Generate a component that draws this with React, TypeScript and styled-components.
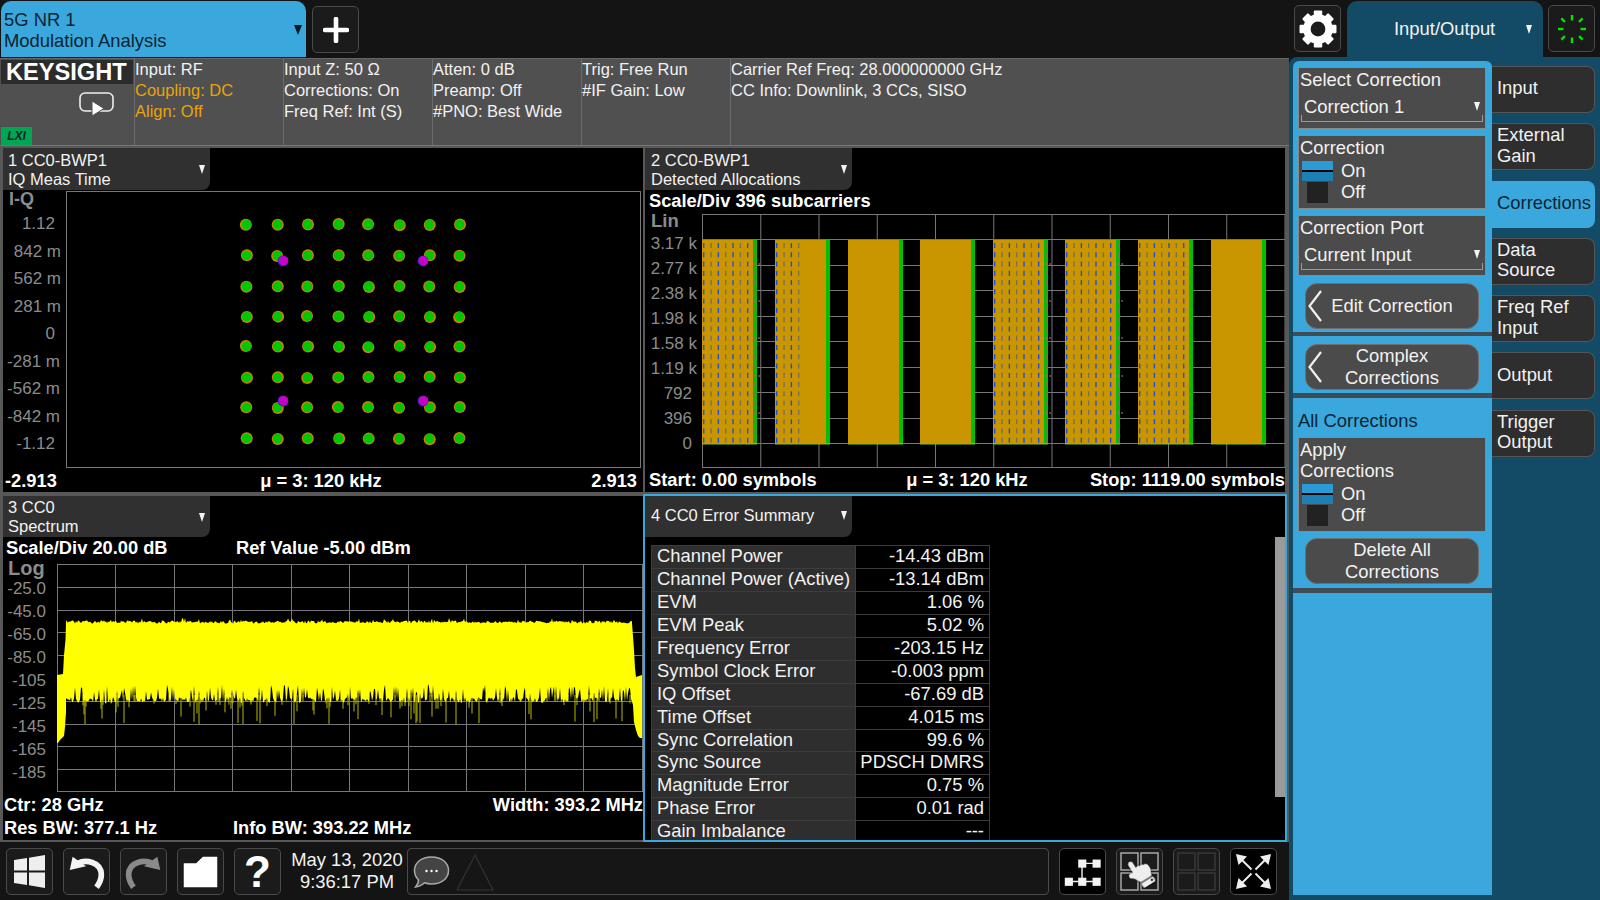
import React from "react";
import styled, { createGlobalStyle } from "styled-components";
import { FaHandPointUp } from "react-icons/fa";

const Global = createGlobalStyle`
  html, body { margin: 0; padding: 0; background: #141414; }
  body { font-family: "Liberation Sans", Arial, sans-serif; overflow: hidden; }
  * { box-sizing: border-box; }
`;

const BLUE = "#3aa8dc";
const NAVY = "#134a66";
const INK = "#0b2433";
const TEXT = "#f2f2f2";
const AXIS = "#8c8c8c";

const Root = styled.div`
  width: 1600px;
  height: 900px;
  display: grid;
  grid-template-columns: 1289px 311px;
  background: #141414;
  overflow: hidden;
  color: ${TEXT};
  font-size: 18.4px;
`;
const LeftColumn = styled.div`
  display: flex;
  flex-direction: column;
  height: 900px;
`;
const TopBar = styled.div`
  height: 58px;
  display: flex;
  align-items: flex-start;
  padding: 1px 0 0 1px;
  gap: 6px;
`;
const MeasureTab = styled.div`
  width: 305px;
  height: 56px;
  background: ${BLUE};
  color: ${INK};
  border-radius: 10px 10px 0 0;
  display: flex;
  align-items: center;
  justify-content: space-between;
  padding: 2px 4px 0 3px;
  line-height: 21px;
`;
const Caret = styled.span<{ $dark?: boolean; $small?: boolean }>`
  display: block;
  width: 0;
  height: 0;
  flex: none;
  border-left: ${(p) => (p.$small ? 3.5 : 4)}px solid transparent;
  border-right: ${(p) => (p.$small ? 3.5 : 4)}px solid transparent;
  border-top: ${(p) => (p.$small ? 9 : 10)}px solid ${(p) => (p.$dark ? "#0b1a24" : "#f4f4f4")};
`;
const IconButton = styled.div<{ $black?: boolean }>`
  position: relative;
  width: 47px;
  height: 47px;
  flex: none;
  display: flex;
  align-items: center;
  justify-content: center;
  background: ${(p) => (p.$black ? "#000" : "#1b1b1b")};
  border: 1px solid #4a4a4a;
  border-radius: 5px;
  color: #fff;
`;
const PlusButton = styled(IconButton)`
  margin-top: 5px;
`;
const InfoStrip = styled.div`
  height: 88px;
  display: grid;
  grid-template-columns: 134px 149px 149px 149px 149px 1fr;
  background: #505050;
  border-top: 1px solid #666;
  border-bottom: 1px solid #777;
  line-height: 21px;
  font-size: 16.5px;
`;
const LogoCell = styled.div`
  display: flex;
  flex-direction: column;
  padding: 1px 1px 0 1px;
`;
const Brand = styled.div`
  height: 24px;
  background: #2c2c2c;
  color: #fff;
  font-weight: 700;
  font-size: 23.6px;
  line-height: 25px;
  padding-left: 5px;
  white-space: nowrap;
`;
const RemoteIcon = styled.svg`
  margin: 8px 0 0 78px;
  display: block;
`;
const LxiBadge = styled.div`
  margin-top: auto;
  width: 31px;
  height: 18px;
  background: #00a651;
  color: #123;
  font-size: 12px;
  font-weight: 700;
  font-style: italic;
  line-height: 18px;
  text-align: center;
`;
const InfoCell = styled.div`
  border-left: 1px solid #6c6c6c;
  white-space: nowrap;
`;
const InfoLine = styled.div<{ $warn?: boolean }>`
  color: ${(p) => (p.$warn ? "#e8a40c" : TEXT)};
`;
const PanelGrid = styled.div`
  height: 696px;
  display: grid;
  grid-template-columns: 642px 644px;
  grid-template-rows: 348px 348px;
  padding-left: 1px;
  background: #585858;
`;
const Panel = styled.section<{ $active?: boolean; $openRight?: boolean }>`
  background: #000;
  border: 2px solid ${(p) => (p.$active ? BLUE : "#585858")};
  border-right-width: ${(p) => (p.$openRight ? 0 : 2)}px;
  display: flex;
  flex-direction: column;
  overflow: hidden;
  min-width: 0;
`;
const PanelTab = styled.div<{ $h: number; $pad?: number; $lift?: number }>`
  width: 207px;
  height: ${(p) => p.$h}px;
  flex: none;
  background: #303030;
  border-radius: 0 0 8px 0;
  font-size: 16.5px;
  line-height: 19px;
  display: flex;
  align-items: center;
  justify-content: space-between;
  padding: 1px 5px ${(p) => p.$lift ?? 0}px ${(p) => p.$pad ?? 5}px;
  white-space: nowrap;
`;
const ScaleRow = styled.div<{ $h: number; $cols?: string; $lh: number; $pad: number }>`
  height: ${(p) => p.$h}px;
  flex: none;
  display: grid;
  grid-template-columns: ${(p) => p.$cols ?? "auto"};
  justify-content: start;
  padding-left: ${(p) => p.$pad}px;
  font-weight: 700;
  font-size: 18.3px;
  line-height: ${(p) => p.$lh}px;
  color: #fff;
  white-space: nowrap;
`;
const PlotRow = styled.div<{ $h: number; $top?: number }>`
  height: ${(p) => p.$h}px;
  flex: none;
  margin-top: ${(p) => p.$top ?? 0}px;
  display: flex;
  svg { display: block; flex: none; }
`;
const Axis = styled.div<{ $w: number }>`
  width: ${(p) => p.$w}px;
  flex: none;
  color: ${AXIS};
`;
const AxisTitle = styled.div<{ $h: number; $lh: number; $size: number; $inset?: number }>`
  height: ${(p) => p.$h}px;
  line-height: ${(p) => p.$lh}px;
  font-size: ${(p) => p.$size}px;
  font-weight: 700;
  padding-left: ${(p) => p.$inset ?? 6}px;
  white-space: nowrap;
`;
const AxisLabel = styled.div<{ $h: number; $right: number }>`
  height: ${(p) => p.$h}px;
  line-height: ${(p) => p.$h}px;
  font-size: 17px;
  text-align: right;
  padding-right: ${(p) => p.$right}px;
  white-space: nowrap;
`;
const PlotFooter = styled.div<{ $l: number; $r: number }>`
  height: 24px;
  flex: none;
  display: grid;
  grid-template-columns: 1fr auto 1fr;
  padding: 0 ${(p) => p.$r}px 0 ${(p) => p.$l}px;
  font-weight: 700;
  font-size: 18.3px;
  line-height: 24px;
  color: #fff;
  white-space: nowrap;
`;
const FooterEnd = styled.span`
  text-align: right;
`;
const SpectrumFooter = styled.div`
  flex: none;
  font-weight: 700;
  font-size: 18.3px;
  line-height: 23px;
  color: #fff;
  padding-left: 1px;
  padding-top: 1px;
  white-space: nowrap;
`;
const FooterLine = styled.div`
  display: flex;
  justify-content: space-between;
`;
const FooterCols = styled.div`
  display: grid;
  grid-template-columns: 229px auto;
  justify-content: start;
`;
const SummaryBody = styled.div`
  flex: 1;
  min-height: 0;
  display: flex;
  justify-content: space-between;
  align-items: flex-start;
  padding-left: 6px;
`;
const SummaryTable = styled.div`
  margin-top: 8px;
  width: 339px;
  height: 295px;
  overflow: hidden;
  border-top: 1px solid #3c3c3c;
`;
const SummaryRow = styled.div`
  display: grid;
  grid-template-columns: 204.5px 134.5px;
  height: 22.95px;
  line-height: 20.9px;
  font-size: 18.4px;
  border-bottom: 1px solid #3c3c3c;
  white-space: nowrap;
`;
const SummaryName = styled.div`
  background: #2e2e2e;
  padding-left: 5px;
  border-left: 1px solid #3c3c3c;
  border-right: 1px solid #3c3c3c;
`;
const SummaryValue = styled.div`
  text-align: right;
  padding-right: 5px;
  border-right: 1px solid #3c3c3c;
`;
const ScrollThumb = styled.div`
  width: 10px;
  height: 260px;
  background: #9a9a9a;
  flex: none;
`;
const BottomBar = styled.div`
  height: 58px;
  display: flex;
  align-items: flex-start;
  padding: 6px 0 0 6px;
  gap: 10px;
`;
const DateBlock = styled.div`
  width: 116px;
  margin: 0 -8px 0 -2px;
  text-align: center;
  line-height: 22px;
  padding-top: 1px;
  white-space: nowrap;
`;
const MessageBox = styled.div`
  width: 642px;
  height: 47px;
  flex: none;
  border: 1px solid #4a4a4a;
  border-radius: 4px;
  background: #161616;
  display: flex;
  align-items: center;
  padding-left: 5px;
  gap: 5px;
  svg { display: block; }
`;
const HelpMark = styled.span`
  font-weight: 700;
  font-size: 44px;
  line-height: 47px;
  color: #fff;
`;
const Hand = styled(FaHandPointUp)`
  position: absolute;
  left: 8px;
  top: 9px;
  transform: rotate(-32deg);
  color: #eeeeee;
  filter: drop-shadow(0 0 1px #000);
`;
const RightColumn = styled.div`
  display: flex;
  flex-direction: column;
  height: 900px;
`;
const RightTop = styled.div`
  height: 57px;
  flex: none;
  display: flex;
  align-items: flex-start;
  padding: 5px 0 0 5px;
`;
const ModeTab = styled.div`
  width: 196px;
  height: 56px;
  margin: -4px 5px 0 6px;
  background: ${NAVY};
  border-radius: 10px 10px 0 0;
  display: flex;
  align-items: center;
  justify-content: space-between;
  padding: 0 11px 0 47px;
  flex: none;
`;
const RightBody = styled.div`
  flex: 1;
  background: ${NAVY};
  border-radius: 8px 0 0 0;
  display: flex;
  align-items: flex-start;
  padding: 4px 0 0 4px;
`;
const BluePanel = styled.div`
  width: 199px;
  height: 834px;
  background: ${BLUE};
  border-radius: 6px 6px 0 0;
  display: flex;
  flex-direction: column;
  flex: none;
  padding-top: 6px;
`;
const FieldBox = styled.div<{ $h: number; $mb?: number }>`
  height: ${(p) => p.$h}px;
  flex: none;
  margin: 0 6px ${(p) => p.$mb ?? 6}px 5px;
  background: #4b4b4b;
  border: 1px solid #8a8a8a;
  padding: 1px 0 0 1px;
  line-height: 21px;
  white-space: nowrap;
`;
const SelectRow = styled.div`
  position: relative;
  height: 26px;
  margin: 3px 0 0 4px;
  display: flex;
  align-items: center;
  justify-content: space-between;
  padding-right: 5px;
  line-height: 21px;
  &::after {
    content: "";
    position: absolute;
    left: -3px;
    right: 2px;
    bottom: -3px;
    height: 6px;
    border: 1px solid #9a9a9a;
    border-top: 0;
  }
`;
const Toggle = styled.div`
  display: grid;
  grid-template-columns: 31px auto;
  grid-auto-rows: 20.5px;
  column-gap: 8px;
  margin: 3px 0 0 2px;
  line-height: 20.5px;
`;
const ToggleOn = styled.div`
  height: 20px;
  background: linear-gradient(#2b9bd6 0 47%, #000 47% 53%, #1d7fb2 53% 100%);
`;
const ToggleOff = styled.div`
  width: 21px;
  height: 21px;
  margin-left: 5px;
  background: #222;
`;
const ActionButton = styled.div<{ $mb?: number }>`
  position: relative;
  height: 46px;
  flex: none;
  margin: 0 13px ${(p) => p.$mb ?? 0}px 12px;
  background: #4b4b4b;
  border: 1px solid #6f6f6f;
  border-radius: 12px;
  display: flex;
  align-items: center;
  justify-content: center;
  text-align: center;
  line-height: 22px;
`;
const BackChevron = styled.svg`
  position: absolute;
  left: 1px;
  top: 6px;
`;
const Divider = styled.div<{ $h: number; $mb: number }>`
  height: ${(p) => p.$h}px;
  flex: none;
  background: #3d4c55;
  margin-bottom: ${(p) => p.$mb}px;
`;
const GroupTitle = styled.div`
  color: ${INK};
  height: 39px;
  padding: 12px 0 0 5px;
  line-height: 21px;
  flex: none;
`;
const Softkeys = styled.div`
  width: 103px;
  flex: none;
  padding-top: 5px;
  display: flex;
  flex-direction: column;
  gap: 10.3px;
`;
const Softkey = styled.div<{ $on?: boolean }>`
  height: 47px;
  flex: none;
  background: ${(p) => (p.$on ? BLUE : "#2e2e2e")};
  color: ${(p) => (p.$on ? INK : TEXT)};
  border: 1px solid ${(p) => (p.$on ? BLUE : "#555")};
  border-left: 0;
  border-radius: 0 8px 8px 0;
  display: flex;
  align-items: center;
  padding: 0 0 2px 5px;
  line-height: 20.5px;
`;

/* ---------- deterministic noise ---------- */
const makeRand = (seed: number) => {
  let s = seed;
  return () => {
    s = (s * 16807) % 2147483647;
    return s / 2147483647;
  };
};

/* ---------- charts ---------- */
const IQ_X = [246.5, 277.5, 307.5, 338.5, 368.5, 399.5, 429.5, 459.5];
const IQ_Y = [224.5, 255.5, 286.5, 316.5, 346.5, 377.5, 407.5, 438.5];
const IQ_M = [[283, 261], [423, 261], [283, 401], [423, 401]];

const IqChart = () => {
  const r = makeRand(4711);
  return (
    <svg width={575} height={278} viewBox="66 191 575 278">
      <rect x={66.5} y={191.5} width={574} height={276} fill="#000" stroke="#777" />
      {IQ_Y.flatMap((y) =>
        IQ_X.map((x) => {
          const dx = (r() - 0.5) * 1.4;
          const dy = (r() - 0.5) * 1.4;
          return (
            <g key={`${x}-${y}`}>
              <circle cx={x + dx} cy={y + dy} r={6} fill="#c98400" />
              <circle cx={x + dx * 0.2} cy={y + dy * 0.2} r={4.8} fill="#00c800" />
            </g>
          );
        })
      )}
      {IQ_M.map(([x, y]) => (
        <g key={`m${x}${y}`}>
          <circle cx={x} cy={y} r={5.4} fill="#3a20c0" />
          <circle cx={x + 0.4} cy={y - 0.3} r={4.8} fill="#c800c8" />
        </g>
      ))}
    </svg>
  );
};

const BARS = [702, 775, 848, 920, 993, 1065, 1138, 1211];
const BAR_COLS = [8, 4, 0, 0, 8, 8, 7, 0];
const DASH_ROWS = [264, 301, 338, 376, 413];

const AllocChart = () => {
  const vs = Array.from({ length: 11 }, (_, i) => 702 + i * 58.25);
  const hs = Array.from({ length: 11 }, (_, i) => 214 + i * 25.45);
  return (
    <svg width={583} height={254} viewBox="702 214 583 254">
      {vs.map((x) => (
        <line key={x} x1={x + 0.5} x2={x + 0.5} y1={214} y2={468} stroke="#777" />
      ))}
      {hs.map((y) => (
        <line key={y} x1={702} x2={1285} y1={Math.min(Math.round(y) + 0.5, 467.5)} y2={Math.min(Math.round(y) + 0.5, 467.5)} stroke="#777" />
      ))}
      {BARS.map((x, b) => (
        <g key={x}>
          <rect x={x} y={240} width={51} height={204} fill="#c99600" />
          <rect x={x + 51} y={240} width={4} height={204} fill="#00c000" />
          <rect x={x} y={443} width={55} height={1.5} fill="#7fc000" />
          {DASH_ROWS.map((y) =>
            BAR_COLS[b] > 0 ? (
              <line
                key={y}
                x1={x}
                x2={x + BAR_COLS[b] * 7.33}
                y1={y}
                y2={y}
                stroke="#e88a3c"
                strokeOpacity={0.6}
                strokeWidth={1.5}
                strokeDasharray="2 1.5"
              />
            ) : null
          )}
          {Array.from({ length: BAR_COLS[b] }, (_, c) =>
            Array.from({ length: 22 }, (_, k) => (
              <rect
                key={`${c}-${k}`}
                x={x + 1 + c * 7.33}
                y={243 + k * 9.27}
                width={1.4}
                height={5}
                fill={c % 2 === 0 ? "#2050d0" : "#77705c"}
              />
            ))
          )}
        </g>
      ))}
    </svg>
  );
};

const buildTrace = () => {
  const r = makeRand(90210);
  const top: string[] = [];
  const bottom: string[] = [];
  const spikes: React.ReactNode[] = [];
  for (let x = 66; x <= 632; x += 1) {
    const t = 620.5 + r() * 3 - (r() < 0.06 ? 2.5 : 0);
    top.push(`${x},${t.toFixed(1)}`);
    const b = 697 + r() * 6 - (r() < 0.22 ? 8 + r() * 6 : 0);
    bottom.unshift(`${x},${b.toFixed(1)}`);
    if (r() < 0.2) {
      const d = 701 + Math.pow(r(), 2) * 24;
      spikes.push(<line key={x} x1={x} x2={x} y1={695} y2={d} stroke="#b8b800" strokeWidth={1} />);
    }
  }
  const left = "57,743 57,675 63,674 64,655 65.5,640 66,623";
  const lower = "66,712 65,727 64,736 62,738 60,740 58,743";
  const right = "632,623 634,650 635,668 636,677 642,675 642,738 640,738 638,736 636,730 634,722 633,705";
  return { points: [left, ...top, right, ...bottom, lower].join(" "), spikes };
};

const SpectrumChart = () => {
  const vs = Array.from({ length: 11 }, (_, i) => 57 + i * 58.45);
  const hs = Array.from({ length: 11 }, (_, i) => 564 + i * 22.8);
  const { points, spikes } = buildTrace();
  return (
    <svg width={586} height={228} viewBox="57 564 586 228">
      {vs.map((x) => (
        <line key={x} x1={Math.round(x) + 0.5} x2={Math.round(x) + 0.5} y1={564} y2={792} stroke="#777" />
      ))}
      {hs.map((y) => (
        <line key={y} x1={57} x2={643} y1={Math.min(Math.round(y) + 0.5, 791.5)} y2={Math.min(Math.round(y) + 0.5, 791.5)} stroke="#777" />
      ))}
      {spikes}
      <polygon points={points} fill="#ffff00" />
    </svg>
  );
};

/* ---------- icons ---------- */
const Gear = () => {
  const teeth = Array.from({ length: 8 }, (_, i) => i * 45);
  return (
    <svg width={38} height={38} viewBox="0 0 36 36">
      {teeth.map((a) => (
        <rect key={a} x={14} y={0.5} width={8} height={9} rx={1} fill="#fff" transform={`rotate(${a} 18 18)`} />
      ))}
      <circle cx={18} cy={18} r={10.5} fill="none" stroke="#fff" strokeWidth={7} />
    </svg>
  );
};
const Spinner = () => (
  <svg width={38} height={38} viewBox="-19 -19 38 38">
    {Array.from({ length: 8 }, (_, i) => (
      <line key={i} x1={0} y1={i % 2 ? -10 : -8.5} x2={0} y2={i % 2 ? -15 : -14} stroke="#00e600" strokeWidth={2.4} transform={`rotate(${i * 45})`} />
    ))}
  </svg>
);
const Plus = () => (
  <svg width={26} height={26} viewBox="0 0 26 26">
    <path d="M13 2v22M2 13h22" stroke="#fff" strokeWidth={4.6} strokeLinecap="round" />
  </svg>
);
const Remote = () => (
  <RemoteIcon width={36} height={25} viewBox="0 0 36 25">
    <rect x={1} y={1} width={33} height={18} rx={5} fill="none" stroke="#eee" strokeWidth={1.6} />
    <path d="M13 9l0 15 12-7.5z" fill="#fff" stroke="#505050" strokeWidth={1} />
  </RemoteIcon>
);
const Windows = () => (
  <svg width={33} height={35} viewBox="0 0 33 35">
    <path d="M1 6l13-2v12.5H1zM16 3.7L32 1v15.5H16zM1 18.500h13V31L1 29zM16 18.500h16V34l-16-2.700z" fill="#eee" />
  </svg>
);
const Undo = ({ color, flip }: { color: string; flip?: boolean }) => (
  <svg width={47} height={45} viewBox="0 0 47 45" style={flip ? { transform: "scaleX(-1)" } : undefined}>
    <path d="M6 21L9 7l14 10z" fill={color} />
    <path d="M13 15C22 9 39 12 39 26c0 5-2 9-5 13" fill="none" stroke={color} strokeWidth={6} />
  </svg>
);
const Folder = () => (
  <svg width={47} height={45} viewBox="0 0 47 45">
    <path d="M6 14h13l7-7h15v32H6z" fill="#fff" />
  </svg>
);
const Bubble = () => (
  <svg width={38} height={36} viewBox="0 0 38 36">
    <path d="M18.500 3c10 0 17 5.500 17 13.500S28.500 30 18.500 30c-2.500 0-5-.4-7-1.200C9 31 6 33 2.500 33c2-2 3-4 3-7C3 23.500 1.500 20.500 1.500 16.500 1.500 8.500 8.500 3 18.500 3z" fill="#444" stroke="#aaa" strokeWidth={1.5} />
    <circle cx={13.500} cy={17} r={1.200} fill="#fff" />
    <circle cx={18.500} cy={17} r={1.200} fill="#fff" />
    <circle cx={23.500} cy={17} r={1.200} fill="#fff" />
  </svg>
);
const Warn = () => (
  <svg width={38} height={38} viewBox="0 0 38 38">
    <path d="M19 2L37 37H1z" fill="none" stroke="#333" strokeWidth={1.2} />
  </svg>
);
const Nodes = () => (
  <svg width={47} height={45} viewBox="0 0 47 45">
    <path d="M23 14h15M23 14v19M9 33h29" stroke="#eee" strokeWidth={1.5} fill="none" />
    {[[19, 10], [34, 10], [5, 29], [19, 29], [34, 29]].map(([x, y]) => (
      <rect key={`${x}${y}`} x={x} y={y} width={8.5} height={8.5} fill="#f2f2f2" />
    ))}
  </svg>
);
const Quad = ({ color }: { color: string }) => (
  <svg width={45} height={45} viewBox="0 0 45 45">
    {[[4, 4], [24, 4], [4, 24], [24, 24]].map(([x, y]) => (
      <rect key={`${x}${y}`} x={x} y={y} width={17} height={17} fill="none" stroke={color} strokeWidth={1.5} />
    ))}
  </svg>
);
const Expand = () => (
  <svg width={45} height={45} viewBox="0 0 45 45">
    {[0, 90, 180, 270].map((a) => (
      <g key={a} transform={`rotate(${a} 22.500 22.500)`}>
        <path d="M5 5l11 2.500-8.500 8.500z" fill="#eee" />
        <path d="M10 10l10.500 10.500" stroke="#eee" strokeWidth={2} />
      </g>
    ))}
  </svg>
);
const Chevron = () => (
  <BackChevron width={16} height={32} viewBox="0 0 16 32">
    <path d="M14 1L2.500 16 14 31" fill="none" stroke="#f0f0f0" strokeWidth={2.2} />
  </BackChevron>
);

/* ---------- data ---------- */
const INFO = [
  [["Input: RF"], ["Coupling: DC", 1], ["Align: Off", 1]],
  [["Input Z: 50 Ω"], ["Corrections: On"], ["Freq Ref: Int (S)"]],
  [["Atten: 0 dB"], ["Preamp: Off"], ["#PNO: Best Wide"]],
  [["Trig: Free Run"], ["#IF Gain: Low"]],
  [["Carrier Ref Freq: 28.000000000 GHz"], ["CC Info: Downlink, 3 CCs, SISO"]],
] as [string, number?][][];

const IQ_LABELS: [string, number][] = [["1.12", 11], ["842 m", 5], ["562 m", 5], ["281 m", 5], ["0", 11], ["-281 m", 6], ["-562 m", 6], ["-842 m", 6], ["-1.12", 11]];
const LIN_LABELS: [string, number][] = [["3.17 k", 5], ["2.77 k", 5], ["2.38 k", 5], ["1.98 k", 5], ["1.58 k", 5], ["1.19 k", 5], ["792", 10], ["396", 10], ["0", 10]];
const LOG_LABELS = ["-25.0", "-45.0", "-65.0", "-85.0", "-105", "-125", "-145", "-165", "-185"];

const SUMMARY = [
  ["Channel Power", "-14.43 dBm"],
  ["Channel Power (Active)", "-13.14 dBm"],
  ["EVM", "1.06 %"],
  ["EVM Peak", "5.02 %"],
  ["Frequency Error", "-203.15 Hz"],
  ["Symbol Clock Error", "-0.003 ppm"],
  ["IQ Offset", "-67.69 dB"],
  ["Time Offset", "4.015 ms"],
  ["Sync Correlation", "99.6 %"],
  ["Sync Source", "PDSCH DMRS"],
  ["Magnitude Error", "0.75 %"],
  ["Phase Error", "0.01 rad"],
  ["Gain Imbalance", "---"],
];

const SOFTKEYS: [string[], boolean?][] = [
  [["Input"]],
  [["External", "Gain"]],
  [["Corrections"], true],
  [["Data", "Source"]],
  [["Freq Ref", "Input"]],
  [["Output"]],
  [["Trigger", "Output"]],
];

const OnOff = () => (
  <Toggle>
    <ToggleOn />
    <span>On</span>
    <ToggleOff />
    <span>Off</span>
  </Toggle>
);

export default function App() {
  return (
    <Root>
      <Global />
      <LeftColumn>
        <TopBar>
          <MeasureTab>
            <div>
              5G NR 1
              <br />
              Modulation Analysis
            </div>
            <Caret $dark />
          </MeasureTab>
          <PlusButton>
            <Plus />
          </PlusButton>
        </TopBar>
        <InfoStrip>
          <LogoCell>
            <Brand>KEYSIGHT</Brand>
            <Remote />
            <LxiBadge>LXI</LxiBadge>
          </LogoCell>
          {INFO.map((col, i) => (
            <InfoCell key={i}>
              {col.map(([t, w]) => (
                <InfoLine key={t} $warn={!!w}>
                  {t}
                </InfoLine>
              ))}
            </InfoCell>
          ))}
        </InfoStrip>
        <PanelGrid>
          <Panel $openRight>
            <PanelTab $h={42}>
              <div>
                1 CC0-BWP1
                <br />
                IQ Meas Time
              </div>
              <Caret $small />
            </PanelTab>
            <PlotRow $h={278} $top={1}>
              <Axis $w={63}>
                <AxisTitle $h={19.25} $lh={16} $size={18}>I-Q</AxisTitle>
                {IQ_LABELS.map(([t, r]) => (
                  <AxisLabel key={t} $h={27.5} $right={r}>{t}</AxisLabel>
                ))}
              </Axis>
              <IqChart />
            </PlotRow>
            <PlotFooter $l={2} $r={6}>
              <span>-2.913</span>
              <span>μ = 3: 120 kHz</span>
              <FooterEnd>2.913</FooterEnd>
            </PlotFooter>
          </Panel>
          <Panel>
            <PanelTab $h={42} $pad={6}>
              <div>
                2 CC0-BWP1
                <br />
                Detected Allocations
              </div>
              <Caret $small />
            </PanelTab>
            <ScaleRow $h={24} $lh={22} $pad={4}>Scale/Div 396 subcarriers</ScaleRow>
            <PlotRow $h={254}>
              <Axis $w={57}>
                <AxisTitle $h={16.5} $lh={14} $size={18.5} $inset={6}>Lin</AxisTitle>
                {LIN_LABELS.map(([t, r]) => (
                  <AxisLabel key={t} $h={25.1} $right={r}>{t}</AxisLabel>
                ))}
              </Axis>
              <AllocChart />
            </PlotRow>
            <PlotFooter $l={4} $r={0}>
              <span>Start: 0.00 symbols</span>
              <span>μ = 3: 120 kHz</span>
              <FooterEnd>Stop: 1119.00 symbols</FooterEnd>
            </PlotFooter>
          </Panel>
          <Panel $openRight>
            <PanelTab $h={41}>
              <div>
                3 CC0
                <br />
                Spectrum
              </div>
              <Caret $small />
            </PanelTab>
            <ScaleRow $h={27} $lh={21} $pad={3} $cols="230px auto">
              <span>Scale/Div 20.00 dB</span>
              <span>Ref Value -5.00 dBm</span>
            </ScaleRow>
            <PlotRow $h={228}>
              <Axis $w={54}>
                <AxisTitle $h={12.5} $lh={8} $size={20} $inset={5}>Log</AxisTitle>
                {LOG_LABELS.map((t) => (
                  <AxisLabel key={t} $h={23} $right={11}>{t}</AxisLabel>
                ))}
              </Axis>
              <SpectrumChart />
            </PlotRow>
            <SpectrumFooter>
              <FooterLine>
                <span>Ctr: 28 GHz</span>
                <span>Width: 393.2 MHz</span>
              </FooterLine>
              <FooterCols>
                <span>Res BW: 377.1 Hz</span>
                <span>Info BW: 393.22 MHz</span>
              </FooterCols>
            </SpectrumFooter>
          </Panel>
          <Panel $active>
            <PanelTab $h={41} $pad={6} $lift={4}>
              <span>4 CC0 Error Summary</span>
              <Caret $small />
            </PanelTab>
            <SummaryBody>
              <SummaryTable>
                {SUMMARY.map(([n, v]) => (
                  <SummaryRow key={n}>
                    <SummaryName>{n}</SummaryName>
                    <SummaryValue>{v}</SummaryValue>
                  </SummaryRow>
                ))}
              </SummaryTable>
              <ScrollThumb />
            </SummaryBody>
          </Panel>
        </PanelGrid>
        <BottomBar>
          <IconButton><Windows /></IconButton>
          <IconButton><Undo color="#f4f4f4" /></IconButton>
          <IconButton><Undo color="#8a8a8a" flip /></IconButton>
          <IconButton><Folder /></IconButton>
          <IconButton><HelpMark>?</HelpMark></IconButton>
          <DateBlock>
            May 13, 2020
            <br />
            9:36:17 PM
          </DateBlock>
          <MessageBox>
            <Bubble />
            <Warn />
          </MessageBox>
          <IconButton $black><Nodes /></IconButton>
          <IconButton>
            <Quad color="#a8a8a8" />
            <Hand size={30} />
          </IconButton>
          <IconButton><Quad color="#383838" /></IconButton>
          <IconButton $black><Expand /></IconButton>
        </BottomBar>
      </LeftColumn>
      <RightColumn>
        <RightTop>
          <IconButton><Gear /></IconButton>
          <ModeTab>
            <span>Input/Output</span>
            <Caret $small />
          </ModeTab>
          <IconButton><Spinner /></IconButton>
        </RightTop>
        <RightBody>
          <BluePanel>
            <FieldBox $h={62}>
              Select Correction
              <SelectRow>
                <span>Correction 1</span>
                <Caret $small />
              </SelectRow>
            </FieldBox>
            <FieldBox $h={74}>
              Correction
              <OnOff />
            </FieldBox>
            <FieldBox $h={61} $mb={7}>
              Correction Port
              <SelectRow>
                <span>Current Input</span>
                <Caret $small />
              </SelectRow>
            </FieldBox>
            <ActionButton $mb={3}>
              <Chevron />
              Edit Correction
            </ActionButton>
            <Divider $h={4} $mb={8} />
            <ActionButton $mb={3}>
              <Chevron />
              <div>
                Complex
                <br />
                Corrections
              </div>
            </ActionButton>
            <Divider $h={5} $mb={0} />
            <GroupTitle>All Corrections</GroupTitle>
            <FieldBox $h={95}>
              Apply
              <br />
              Corrections
              <OnOff />
            </FieldBox>
            <ActionButton $mb={4}>
              <div>
                Delete All
                <br />
                Corrections
              </div>
            </ActionButton>
            <Divider $h={5} $mb={0} />
          </BluePanel>
          <Softkeys>
            {SOFTKEYS.map(([lines, on]) => (
              <Softkey key={lines.join()} $on={on}>
                <div>
                  {lines.map((l, i) => (
                    <React.Fragment key={l}>
                      {i > 0 && <br />}
                      {l}
                    </React.Fragment>
                  ))}
                </div>
              </Softkey>
            ))}
          </Softkeys>
        </RightBody>
      </RightColumn>
    </Root>
  );
}
